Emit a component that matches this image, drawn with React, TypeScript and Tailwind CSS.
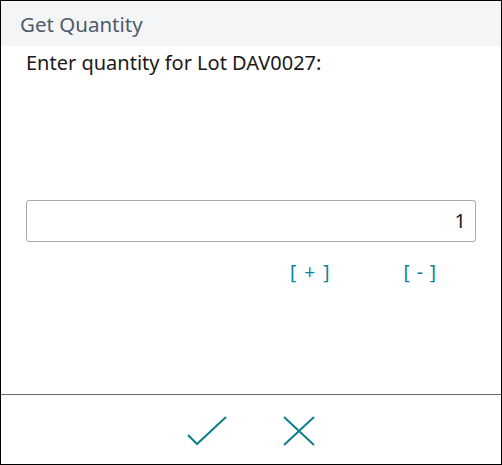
export default function App() {
  return (
    <div className="w-[502px] h-[465px] border border-black bg-white flex flex-col font-['Noto_Sans',sans-serif]">
      <div className="h-[45px] bg-[#f4f5f7] px-[19px] flex items-center pt-[1px] text-[20.5px] text-[#4f5b6b]">
        Get Quantity
      </div>
      <div className="px-[25px] pt-[3px] text-[20px] text-[#1a1a1a] leading-[28px]">
        Enter quantity for Lot DAV0027:
      </div>
      <div className="px-[25px] mt-[123px]">
        <div className="h-[42px] border border-[#a8a8a8] rounded-[3px] flex items-center justify-end px-[9px] text-[20px] text-[#1a1a1a]">
          1
        </div>
      </div>
      <div className="flex pl-[289px] mt-[17px] text-[19px] text-[#0b8497] leading-[26px]">
        <span className="flex gap-[8px]">
          <span>[</span>
          <span>+</span>
          <span>]</span>
        </span>
        <span className="flex gap-[7px] ml-[74px]">
          <span>[</span>
          <span>-</span>
          <span>]</span>
        </span>
      </div>
      <div className="flex-1" />
      <div className="h-[70px] border-t border-[#6b6b6b] flex justify-center items-center gap-[56px] pt-[3px]">
        <svg width="40" height="30" viewBox="0 0 40 30" fill="none" stroke="#0b7f8c" strokeWidth="2">
          <path d="M1 19 L10 28 L39 1" />
        </svg>
        <svg width="32" height="30" viewBox="0 0 32 30" fill="none" stroke="#0b7f8c" strokeWidth="2">
          <path d="M1 1 L31 29 M31 1 L1 29" />
        </svg>
      </div>
    </div>
  );
}
